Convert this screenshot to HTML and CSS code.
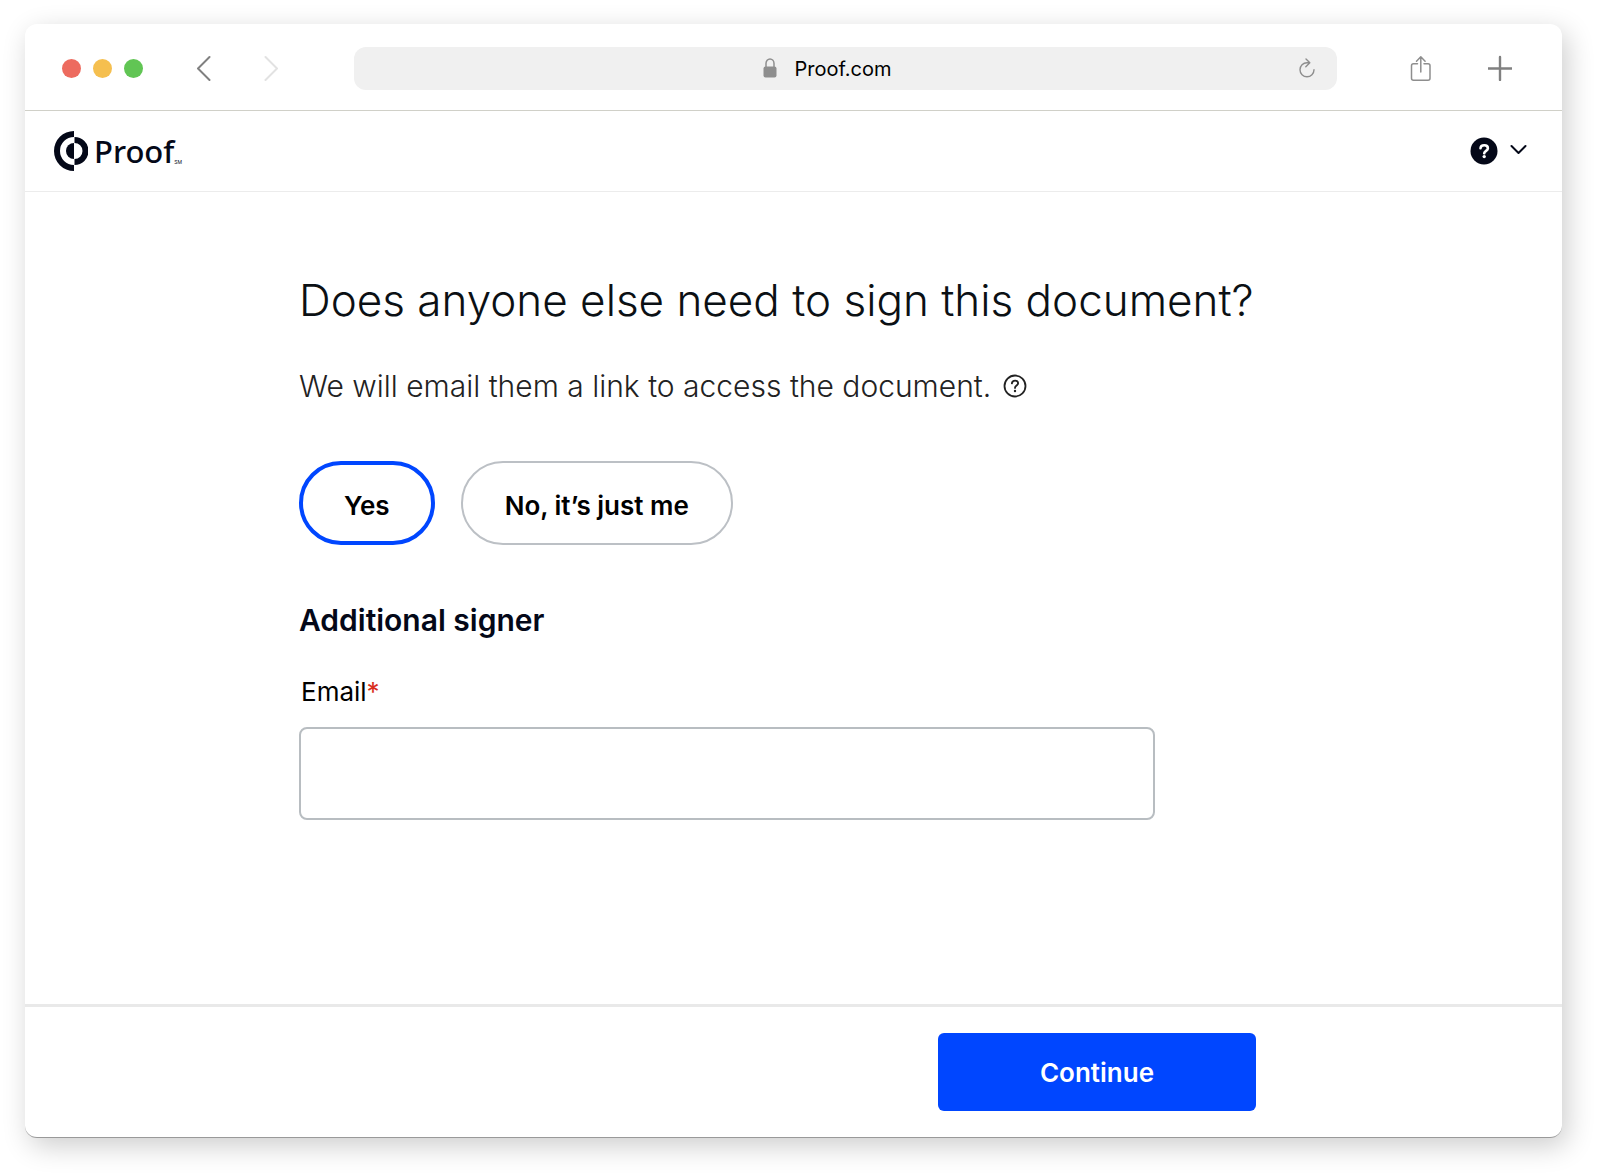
FILE: index.html
```html
<!DOCTYPE html>
<html lang="en">
<head>
<meta charset="utf-8">
<meta name="viewport" content="width=device-width, initial-scale=1">
<title>Proof.com</title>
<link rel="stylesheet" href="styles.css">
</head>
<body>
<div class="window">
  <div class="toolbar">
    <div class="dots">
      <span class="dot red"></span>
      <span class="dot yellow"></span>
      <span class="dot green"></span>
    </div>
    <button class="icon-btn back" type="button" aria-label="Back">
      <svg width="24" height="26" viewBox="0 0 24 26"><path d="M17.5 2L6 13.5 17.5 25" stroke="#808080"/></svg>
    </button>
    <button class="icon-btn forward" type="button" aria-label="Forward">
      <svg width="24" height="26" viewBox="0 0 24 26"><path d="M6.5 2L18 13.5 6.5 25" stroke="#e2e2e2"/></svg>
    </button>
    <div class="address">
      <div class="address-text">
        <svg width="14" height="20" viewBox="0 0 14 20"><path d="M3 10V5.500a4 4.500 0 0 1 8 0V10" stroke="#8e8e8e" stroke-width="1.500"/><rect x="0.500" y="8.500" width="13" height="11" rx="2" fill="#8e8e8e"/></svg>
        <input class="url" type="text" value="Proof.com" aria-label="Address">
      </div>
      <button class="icon-btn" type="button" aria-label="Reload">
        <svg width="16" height="20" viewBox="0 0 16 20"><path d="M10.500 4.700H8A7 7 0 1 0 15 11.700M7 1L10.800 4.700 6.800 8.700" stroke="#8e8e8e" stroke-width="1.400"/></svg>
      </button>
    </div>
    <button class="icon-btn share" type="button" aria-label="Share">
      <svg width="24" height="26" viewBox="0 0 24 26"><path d="M8.500 8.700H4.500a2 2 0 0 0-2 2v12.500a2 2 0 0 0 2 2h14.500a2 2 0 0 0 2-2V10.700a2 2 0 0 0-2-2h-4M11.800 17V2M7.500 6.200l4.300-4.500 4.300 4.500" stroke="#8e8e8e" stroke-width="1.500"/></svg>
    </button>
    <button class="icon-btn plus" type="button" aria-label="New tab">
      <svg width="24" height="26" viewBox="0 0 24 26"><path d="M12 2v23M0.500 13.500h23" stroke="#808080" stroke-width="2.400"/></svg>
    </button>
  </div>

  <header class="header">
    <a class="logo" href="#" aria-label="Proof">
      <svg width="34" height="40" viewBox="0 0 34 40">
        <path fill="#040818" d="M20 0A20 20 0 0 0 20 40V34A14 14 0 0 1 20 6Z"/>
        <path fill="#040818" d="M20 12A8 8 0 0 0 20 28Z"/>
        <path fill="#040818" d="M20.500 6A14 14 0 0 1 20.500 34V28A8 8 0 0 0 20.500 12Z"/>
      </svg>
      <span class="logo-text">Proof</span><span class="logo-mark">SM</span>
    </a>
    <button class="help" type="button" aria-label="Help">
      <svg width="28" height="28" viewBox="0 0 28 28"><circle cx="14" cy="14" r="13.500" fill="#040818"/><path d="M10.500 11.300c.2-4 7.300-4.100 7.400-.1 0 2.500-3.500 2.700-3.700 5.100" stroke="#fff" stroke-width="2.600"/><circle cx="14.200" cy="19.600" r="1.700" fill="#fff"/></svg>
      <svg width="18" height="14" viewBox="0 0 18 14"><path d="M1.500 2l7 7 7-7" stroke="#040818" stroke-width="2"/></svg>
    </button>
  </header>

  <main class="content">
    <form class="column" id="signer">
      <h1>Does anyone else need to sign this document?</h1>
      <p class="sub">We will email them a link to access the document.
        <svg width="24" height="24" viewBox="0 0 24 24"><circle cx="12" cy="12" r="10.500" stroke="#222" stroke-width="1.800"/><path d="M8.900 9.300c.4-3.600 6.200-3.500 6.200-.1 0 2.300-3.100 2.300-3.100 4.700" stroke="#222" stroke-width="1.900"/><circle cx="12" cy="17" r="1.200" fill="#222"/></svg>
      </p>
      <div class="choices">
        <button class="choice selected" type="button" aria-pressed="true">Yes</button>
        <button class="choice" type="button" aria-pressed="false">No, it’s just me</button>
      </div>
      <h2>Additional signer</h2>
      <label for="email">Email<span class="required">*</span></label>
      <input class="email" id="email" type="email" required>
    </form>
  </main>

  <footer class="footer">
    <div class="column">
      <button class="continue" type="submit" form="signer">Continue</button>
    </div>
  </footer>
</div>
</body>
</html>
```

FILE: styles.css
```css
* {
  box-sizing: border-box;
}
body {
  margin: 0;
  padding: 24px 38px 38px 25px;
  min-height: 100vh;
  display: flex;
  background: #fff;
  color: #000;
  font-family: Inter, "Liberation Sans", sans-serif;
}
button, input {
  font-family: inherit;
}
svg {
  display: block;
  fill: none;
  stroke-width: 2;
  stroke-linecap: round;
  stroke-linejoin: round;
}
.window {
  flex: 1;
  display: flex;
  flex-direction: column;
  border-bottom: 1px solid #999;
  border-radius: 12px;
  background: #fff;
  box-shadow: 5px 8px 28px rgba(0, 0, 0, 0.2);
}

/* browser bar */
.toolbar {
  display: flex;
  align-items: center;
  height: 87px;
  padding: 2px 50px 0 37px;
  border-bottom: 1px solid #d0d0c8;
}
.dots {
  display: flex;
  gap: 12px;
}
.dot {
  width: 19px;
  height: 19px;
  border-radius: 50%;
}
.red {
  background: #ed6b5f;
}
.yellow {
  background: #f5bf4f;
}
.green {
  background: #61c554;
}
.icon-btn {
  padding: 0;
  border: 0;
  background: none;
}
.back {
  margin-left: 49px;
}
.forward {
  margin: 0 71px 0 43px;
}
.address {
  flex: 1;
  display: flex;
  align-items: center;
  height: 43px;
  padding-right: 22px;
  border-radius: 12px;
  background: #f0f0f0;
}
.address-text {
  flex: 1;
  display: flex;
  justify-content: center;
  align-items: center;
  gap: 18px;
}
.url {
  width: 96px;
  padding: 1px 0 0;
  border: 0;
  background: none;
  font-size: 20px;
  line-height: 24px;
}
.share {
  margin: 0 55px 0 72px;
}

/* app header */
.header {
  display: flex;
  justify-content: space-between;
  align-items: center;
  height: 81px;
  padding: 0 34px 0 29px;
  border-bottom: 1px solid #ececec;
}
.logo {
  display: flex;
  align-items: center;
  color: #040818;
  text-decoration: none;
}
.logo-text {
  margin-left: 6px;
  font-family: "Noto Sans", sans-serif;
  font-size: 31px;
  font-weight: 500;
  line-height: 38px;
}
.logo-mark {
  align-self: flex-end;
  font-size: 5px;
  line-height: 18px;
}
.help {
  display: flex;
  align-items: center;
  gap: 12px;
  padding: 0;
  border: 0;
  background: none;
}

/* form */
.content {
  flex: 1;
  padding: 81px 0 0 274px;
}
.column {
  max-width: 957px;
}
h1 {
  margin: 0;
  font-size: 44px;
  font-weight: 300;
  line-height: 54px;
  color: #0b1014;
}
.sub {
  display: flex;
  align-items: center;
  gap: 12px;
  margin: 41px 0 57px;
  font-size: 30px;
  font-weight: 300;
  line-height: 36px;
  color: #222;
}
.choices {
  display: flex;
  gap: 26px;
}
.choice {
  height: 84px;
  padding: 4px 42px 0;
  border: 2px solid #bcc0c5;
  border-radius: 42px;
  background: #fff;
  color: #000;
  font-size: 26px;
  font-weight: 600;
}
.selected {
  padding: 4px 41px 0;
  border: 4px solid #0046ff;
}
h2 {
  margin: 57px 0 38px;
  font-size: 30px;
  font-weight: 600;
  line-height: 36px;
  color: #040818;
}
label {
  display: block;
  margin-bottom: 19px;
  padding-left: 2px;
  font-size: 26px;
  line-height: 32px;
}
.required {
  color: #d92d20;
}
.email {
  display: block;
  width: 100%;
  max-width: 856px;
  height: 93px;
  padding: 0 24px;
  border: 2px solid #b8bdc1;
  border-radius: 8px;
  font-size: 26px;
}

/* bottom bar */
.footer {
  padding: 26px 0 26px 274px;
  border-top: 3px solid #e9e9e9;
}
.footer .column {
  display: flex;
  justify-content: flex-end;
}
.continue {
  width: 318px;
  height: 78px;
  border: 0;
  border-radius: 6px;
  background: #0046ff;
  color: #fff;
  font-size: 26px;
  font-weight: 600;
}
```
